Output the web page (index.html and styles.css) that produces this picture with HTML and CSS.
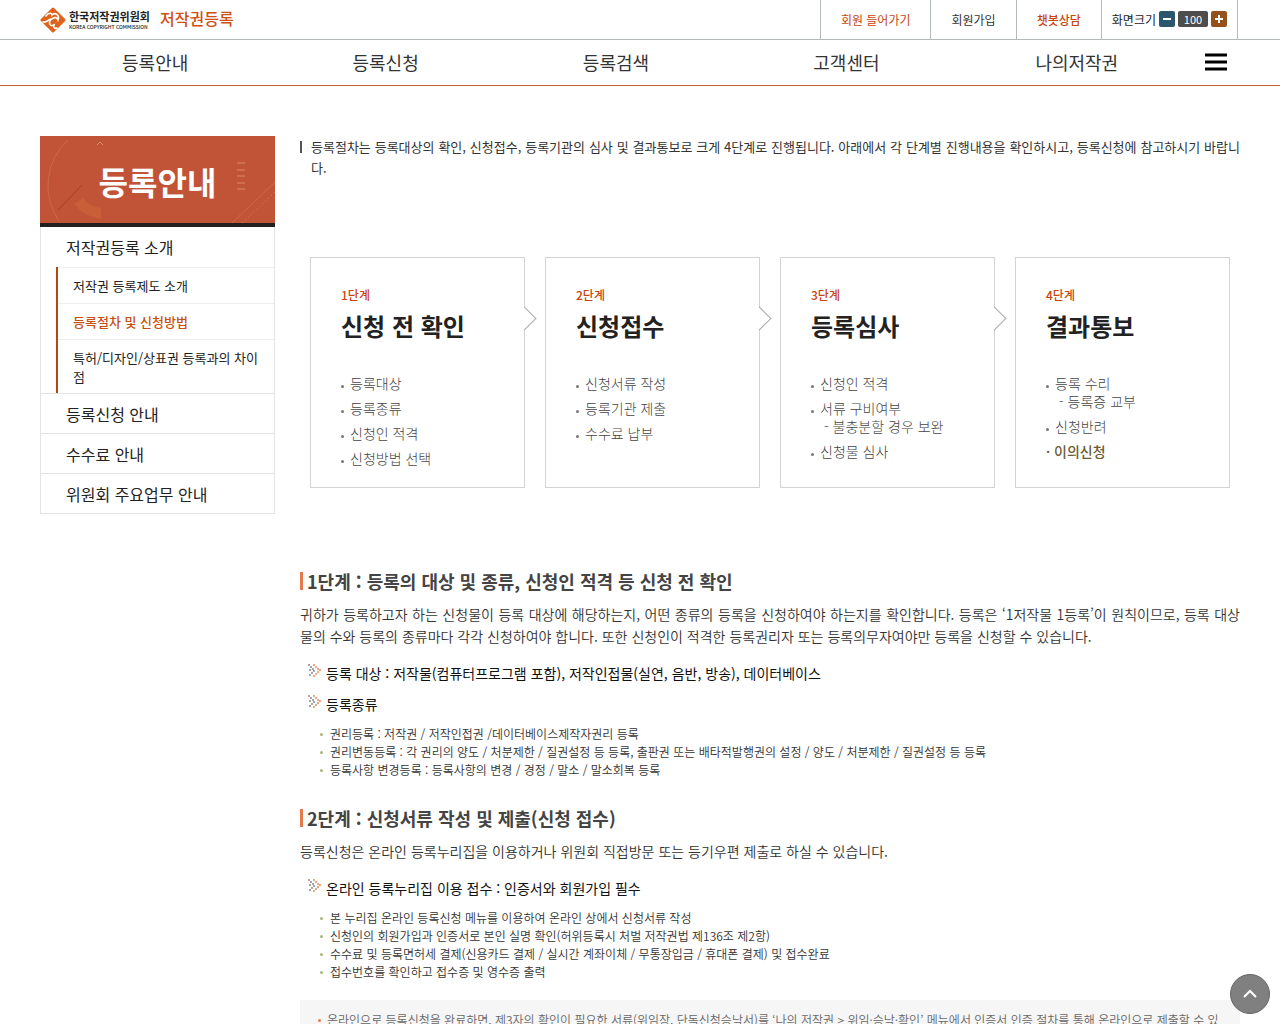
FILE: index.html
```html
<!DOCTYPE html>
<html lang="ko">
  <head>
    <meta charset="utf-8">
    <title>저작권등록</title>
    <link rel="stylesheet" href="styles.css">
  </head>
  <body>
    <svg class="defs" aria-hidden="true">
      <symbol id="arrows" viewBox="0 0 13 13">
        <path class="gray" d="M1 1h0M3 3h0M5 5h0M6 7h0M4 9h0M2 11h0M2 6h0"/>
        <path class="red" d="M6 1h0M8 3h0M10 5h0M12 6h0M10 8h0M8 10h0M6 12h0"/>
      </symbol>
    </svg>

    <header class="header">
      <div class="top">
        <div class="wrap top-inner">
          <a class="logo" href="#">
            <svg class="logo-mark" viewBox="0 0 26 26" aria-hidden="true">
              <path d="M13 2 24 13 13 24 2 13Z" fill="#e0631d" stroke="#e0631d" stroke-width="3" stroke-linejoin="round"/>
              <path d="M6 9C9 5 12 6 12 8C15 5 20 8 18 13C17 10 14 10 12 12M3 15C7 16 8 12 11 12C8 16 10 20 14 18C13 21 15 22 17 21" fill="none" stroke="#fff" stroke-width="1.600" stroke-linecap="round"/>
            </svg>
            <span class="logo-text">
              <strong>한국저작권위원회</strong>
              <small>KOREA COPYRIGHT COMMISSION</small>
            </span>
            <span class="logo-site">저작권등록</span>
          </a>
          <ul class="util">
            <li><a class="point" href="#">회원 들어가기</a></li>
            <li><a href="#">회원가입</a></li>
            <li><a class="point strong" href="#">챗봇상담</a></li>
            <li class="zoom">
              <span>화면크기</span>
              <button class="zoom-out" type="button" aria-label="축소"><svg viewBox="0 0 16 16"><path d="M4 8h8"/></svg></button>
              <span class="zoom-value">100</span>
              <button class="zoom-in" type="button" aria-label="확대"><svg viewBox="0 0 16 16"><path d="M4 8h8M8 4v8"/></svg></button>
            </li>
          </ul>
        </div>
      </div>
      <div class="gnb">
        <nav class="wrap gnb-inner">
          <a href="#">등록안내</a>
          <a href="#">등록신청</a>
          <a href="#">등록검색</a>
          <a href="#">고객센터</a>
          <a href="#">나의저작권</a>
          <button class="menu" type="button" aria-label="전체메뉴"><svg viewBox="0 0 22 18"><path d="M0 2h22M0 9h22M0 16h22"/></svg></button>
        </nav>
      </div>
    </header>

    <div class="wrap container">
      <aside class="side">
        <div class="side-title">
          <svg class="side-deco" viewBox="0 0 235 87" preserveAspectRatio="xMidYMid slice" aria-hidden="true">
            <path d="M28 4a62 62 0 0 0-9 81" fill="none" stroke="#cd6a48"/>
            <path d="M34 68a42 42 0 0 0 27 15V72a28 28 0 0 1-18-10Z" fill="#c85f38"/>
            <path d="M18 74 42 49" stroke="#a83e28"/>
            <path d="M57 9l3-3 3 3M197 27h8M197 34h8M197 40h8M197 47h8M197 53h8" fill="none" stroke="#dc8c6e"/>
            <path d="M192 87 235 46" stroke="#cd6a48"/>
            <path d="M202 87 235 56" stroke="#d98460" stroke-dasharray="1 3"/>
          </svg>
          <h2>등록안내</h2>
        </div>
        <ul class="lnb">
          <li>
            <a href="#">저작권등록 소개</a>
            <ul class="lnb-sub">
              <li><a href="#">저작권 등록제도 소개</a></li>
              <li><a class="on" href="#">등록절차 및 신청방법</a></li>
              <li><a href="#">특허/디자인/상표권 등록과의 차이점</a></li>
            </ul>
          </li>
          <li><a href="#">등록신청 안내</a></li>
          <li><a href="#">수수료 안내</a></li>
          <li><a href="#">위원회 주요업무 안내</a></li>
        </ul>
      </aside>

      <main class="content">
        <p class="intro">등록절차는 등록대상의 확인, 신청접수, 등록기관의 심사 및 결과통보로 크게 4단계로 진행됩니다. 아래에서 각 단계별 진행내용을 확인하시고, 등록신청에 참고하시기 바랍니다.</p>

        <ol class="steps">
          <li>
            <span class="step-no">1단계</span>
            <strong>신청 전 확인</strong>
            <ul>
              <li>등록대상</li>
              <li>등록종류</li>
              <li>신청인 적격</li>
              <li>신청방법 선택</li>
            </ul>
          </li>
          <li>
            <span class="step-no">2단계</span>
            <strong>신청접수</strong>
            <ul>
              <li>신청서류 작성</li>
              <li>등록기관 제출</li>
              <li>수수료 납부</li>
            </ul>
          </li>
          <li>
            <span class="step-no">3단계</span>
            <strong>등록심사</strong>
            <ul>
              <li>신청인 적격</li>
              <li>서류 구비여부<span class="dash">- 불충분할 경우 보완</span></li>
              <li>신청물 심사</li>
            </ul>
          </li>
          <li>
            <span class="step-no">4단계</span>
            <strong>결과통보</strong>
            <ul>
              <li>등록 수리<span class="dash">- 등록증 교부</span></li>
              <li>신청반려</li>
              <li class="objection"><a href="#">· 이의신청</a></li>
            </ul>
          </li>
        </ol>

        <h3>1단계 : 등록의 대상 및 종류, 신청인 적격 등 신청 전 확인</h3>
        <p class="desc">귀하가 등록하고자 하는 신청물이 등록 대상에 해당하는지, 어떤 종류의 등록을 신청하여야 하는지를 확인합니다. 등록은 ‘1저작물 1등록’이 원칙이므로, 등록 대상물의 수와 등록의 종류마다 각각 신청하여야 합니다. 또한 신청인이 적격한 등록권리자 또는 등록의무자여야만 등록을 신청할 수 있습니다.</p>
        <h4><svg class="arrows" aria-hidden="true"><use href="#arrows"/></svg>등록 대상 : 저작물(컴퓨터프로그램 포함), 저작인접물(실연, 음반, 방송), 데이터베이스</h4>
        <h4><svg class="arrows" aria-hidden="true"><use href="#arrows"/></svg>등록종류</h4>
        <ul class="dots">
          <li>권리등록 : 저작권 / 저작인접권 /데이터베이스제작자권리 등록</li>
          <li>권리변동등록 : 각 권리의 양도 / 처분제한 / 질권설정 등 등록, 출판권 또는 배타적발행권의 설정 / 양도 / 처분제한 / 질권설정 등 등록</li>
          <li>등록사항 변경등록 : 등록사항의 변경 / 경정 / 말소 / 말소회복 등록</li>
        </ul>

        <h3>2단계 : 신청서류 작성 및 제출(신청 접수)</h3>
        <p class="desc">등록신청은 온라인 등록누리집을 이용하거나 위원회 직접방문 또는 등기우편 제출로 하실 수 있습니다.</p>
        <h4><svg class="arrows" aria-hidden="true"><use href="#arrows"/></svg>온라인 등록누리집 이용 접수 : 인증서와 회원가입 필수</h4>
        <ul class="dots">
          <li>본 누리집 온라인 등록신청 메뉴를 이용하여 온라인 상에서 신청서류 작성</li>
          <li>신청인의 회원가입과 인증서로 본인 실명 확인(허위등록시 처벌 저작권법 제136조 제2항)</li>
          <li>수수료 및 등록면허세 결제(신용카드 결제 / 실시간 계좌이체 / 무통장입금 / 휴대폰 결제) 및 접수완료</li>
          <li>접수번호를 확인하고 접수증 및 영수증 출력</li>
        </ul>
        <div class="note">
          <p>온라인으로 등록신청을 완료하면, 제3자의 확인이 필요한 서류(위임장, 단독신청승낙서)를 ‘나의 저작권 &gt; 위임·승낙·확인’ 메뉴에서 인증서 인증 절차를 통해 온라인으로 제출할 수 있</p>
        </div>
      </main>
    </div>

    <button class="to-top" type="button" aria-label="맨 위로"><svg viewBox="0 0 14 10"><path d="M1 8l6-6 6 6"/></svg></button>
  </body>
</html>
```
FILE: styles.css
```css
* {
  box-sizing: border-box;
}
body {
  margin: 0;
  background: #fff;
  color: #333;
  font-family: "Noto Sans CJK KR", "Noto Sans", sans-serif;
  font-size: 14px;
}
ul,
ol,
p,
h2,
h3,
h4 {
  margin: 0;
  padding: 0;
  list-style: none;
}
a {
  color: inherit;
  text-decoration: none;
}
button {
  padding: 0;
  border: 0;
  background: none;
  cursor: pointer;
}
.defs {
  display: none;
}
.wrap {
  max-width: 1280px;
  margin: 0 auto;
  padding: 0 40px;
}

/* header */
.top {
  border-bottom: 1px solid #b4b9b9;
}
.top-inner {
  display: flex;
  justify-content: space-between;
  height: 39px;
}
.logo {
  display: flex;
  align-items: center;
}
.logo-mark {
  width: 26px;
  height: 26px;
}
.logo-text {
  display: flex;
  flex-direction: column;
  width: 88px;
  margin: 0 3px;
  color: #222;
}
.logo-text strong {
  font-size: 11px;
  line-height: 13px;
}
.logo-text small {
  font-size: 5px;
  font-weight: 500;
  line-height: 7px;
  white-space: nowrap;
}
.logo-site {
  padding-bottom: 4px;
  color: #cf4f17;
  font-size: 16px;
  font-weight: 500;
}
.util {
  display: flex;
  margin-right: 2px;
  border-right: 1px solid #b4b9b9;
  font-size: 12px;
}
.util li {
  display: flex;
  align-items: center;
  padding: 0 20px 1px;
  border-left: 1px solid #b4b9b9;
}
.util .point {
  color: #c8450f;
}
.util .strong {
  font-weight: 500;
}
.util .zoom {
  gap: 3px;
  padding: 0 10px 1px;
  color: #222;
}
.zoom button {
  width: 16px;
  height: 16px;
  border-radius: 2px;
}
.zoom svg {
  display: block;
  fill: none;
  stroke: #fff;
  stroke-width: 2;
}
.zoom .zoom-out {
  background: #2b566b;
}
.zoom .zoom-in {
  background: #96501a;
}
.zoom-value {
  width: 30px;
  border-radius: 2px;
  background: #4d4d4d;
  color: #fff;
  font-size: 11px;
  line-height: 16px;
  text-align: center;
}
.gnb {
  border-bottom: 1px solid #c1602f;
}
.gnb-inner {
  display: grid;
  grid-template-columns: repeat(5, 1fr) 48px;
  align-items: center;
  height: 45px;
  padding-bottom: 2px;
  text-align: center;
  font-size: 18px;
}
.menu svg {
  display: block;
  width: 22px;
  height: 18px;
  margin: 0 auto;
  stroke: #000;
  stroke-width: 3;
}

/* layout */
.container {
  display: flex;
  align-items: flex-start;
  gap: 25px;
  padding-top: 50px;
}

/* left menu */
.side {
  flex: 0 0 235px;
}
.side-title {
  position: relative;
  border-bottom: 4px solid #231f20;
  background: #c15337;
}
.side-deco {
  position: absolute;
  inset: 0;
  width: 100%;
  height: 100%;
}
.side-title h2 {
  position: relative;
  padding: 21px 0 18px;
  color: #fff;
  font-size: 32px;
  font-weight: 700;
  line-height: 48px;
  text-align: center;
}
.lnb {
  border: 1px solid #e3e3e3;
  border-top: 0;
  color: #222;
  font-size: 16px;
}
.lnb > li + li {
  border-top: 1px solid #e3e3e3;
}
.lnb > li > a {
  display: block;
  padding: 8px 25px;
  line-height: 24px;
}
.lnb > li + li > a {
  padding-bottom: 7px;
}
.lnb-sub {
  margin-left: 15px;
  border-left: 2px solid #b5470f;
  font-size: 13px;
  line-height: 19px;
}
.lnb-sub a {
  display: block;
  padding: 8px 15px;
  border-top: 1px solid #eee;
  word-break: break-all;
}
.lnb-sub li:last-child a {
  padding-bottom: 7px;
}
.lnb-sub .on {
  color: #c8500f;
  font-weight: 500;
}

/* content */
.content {
  flex: 1;
  min-width: 0;
}
.intro {
  position: relative;
  padding-left: 11px;
  font-size: 13px;
  line-height: 21px;
  text-align: justify;
}
.intro::before {
  content: "";
  position: absolute;
  top: 5px;
  left: 0;
  width: 2px;
  height: 12px;
  background: #555;
}
.steps {
  display: grid;
  grid-template-columns: repeat(4, 1fr);
  gap: 20px;
  margin: 79px 10px 80px;
}
.steps > li {
  position: relative;
  min-height: 230px;
  padding: 28px 10px 20px 30px;
  border: 1px solid #d3d3d3;
}
.steps > li:not(:last-child)::after {
  content: "";
  position: absolute;
  top: 52px;
  right: -9px;
  width: 16px;
  height: 16px;
  border: solid #aaa;
  border-width: 1px 1px 0 0;
  background: linear-gradient(45deg, transparent 50%, #fff 50%);
  transform: rotate(45deg);
}
.step-no {
  display: block;
  color: #c8450f;
  font-size: 12px;
  font-weight: 500;
  line-height: 18px;
}
.steps strong {
  display: block;
  color: #222;
  font-size: 24px;
  font-weight: 700;
  line-height: 36px;
  margin: 4px 0 30px;
}
.steps ul {
  display: grid;
  gap: 7px;
  color: #444;
  font-weight: 300;
  line-height: 18px;
}
.steps ul li {
  position: relative;
  padding-left: 9px;
}
.steps ul li::before {
  content: "";
  position: absolute;
  top: 11px;
  left: 0;
  width: 3px;
  height: 3px;
  border-radius: 50%;
  background: #777;
}
.dash {
  display: block;
  padding-left: 4px;
}
.steps ul .objection {
  padding-left: 0;
  color: #6b5a35;
  font-weight: 500;
}
.steps ul .objection::before {
  display: none;
}
h3 {
  display: flex;
  align-items: center;
  gap: 4px;
  color: #444;
  font-size: 18px;
  font-weight: 700;
  line-height: 26px;
}
h3::before {
  content: "";
  width: 3px;
  height: 18px;
  background: #e57a4c;
}
.desc {
  margin: 9px 0 16px;
  font-weight: 350;
  line-height: 22px;
  text-align: justify;
}
h4 {
  display: flex;
  gap: 5px;
  margin-bottom: 10px;
  padding-left: 8px;
  color: #111;
  font-size: 14px;
  font-weight: 400;
  line-height: 21px;
}
.arrows {
  width: 13px;
  height: 13px;
  margin-top: 1px;
  fill: none;
  stroke-width: 2;
  stroke-linecap: round;
}
.gray {
  stroke: #8a8a8a;
}
.red {
  stroke: #ee8a5a;
}
.dots {
  margin-bottom: 26px;
  padding-left: 20px;
  font-size: 12px;
  font-weight: 350;
  line-height: 18px;
}
.dots li {
  display: flex;
  align-items: center;
  gap: 7px;
}
.dots li::before {
  content: "";
  width: 3px;
  height: 3px;
  border-radius: 50%;
  background: #a9b878;
}
.note {
  margin-top: -7px;
  padding: 10px 18px;
  background: #f6f6f6;
  color: #666;
  font-size: 12px;
  font-weight: 350;
  line-height: 20px;
}
.note p {
  display: flex;
  gap: 6px;
}
.note p::before {
  content: "";
  flex: none;
  width: 3px;
  height: 3px;
  margin-top: 9px;
  border-radius: 50%;
  background: #e57a4c;
}
.to-top {
  position: fixed;
  right: 10px;
  bottom: 10px;
  width: 40px;
  height: 40px;
  border: 1px solid #666;
  border-radius: 50%;
  background: #808080;
}
.to-top svg {
  display: block;
  width: 14px;
  height: 10px;
  margin: 0 auto;
  fill: none;
  stroke: #fff;
  stroke-width: 2;
}
```
